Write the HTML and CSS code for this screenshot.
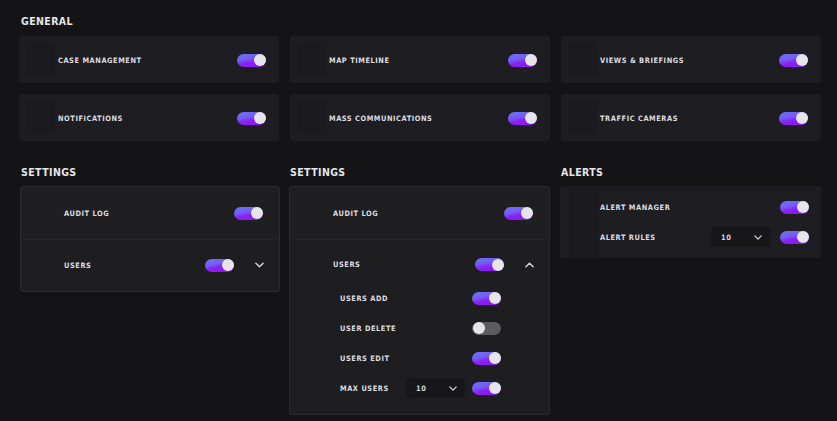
FILE: index.html
```html
<!DOCTYPE html>
<html>
<head>
<meta charset="utf-8">
<link rel="stylesheet" href="styles.css">
</head>
<body>
<div class="page">
  <section class="general">
    <h2 class="heading">GENERAL</h2>
    <div class="general-grid">
      <div class="tile"><div class="tile-icon"></div><span class="label">CASE MANAGEMENT</span><span class="toggle on"></span></div>
      <div class="tile"><div class="tile-icon"></div><span class="label">MAP TIMELINE</span><span class="toggle on"></span></div>
      <div class="tile"><div class="tile-icon"></div><span class="label">VIEWS &amp; BRIEFINGS</span><span class="toggle on"></span></div>
      <div class="tile"><div class="tile-icon"></div><span class="label">NOTIFICATIONS</span><span class="toggle on"></span></div>
      <div class="tile"><div class="tile-icon"></div><span class="label">MASS COMMUNICATIONS</span><span class="toggle on"></span></div>
      <div class="tile"><div class="tile-icon"></div><span class="label">TRAFFIC CAMERAS</span><span class="toggle on"></span></div>
    </div>
  </section>

  <section class="columns">
    <div class="col">
      <h2 class="heading">SETTINGS</h2>
      <div class="panel">
        <div class="row"><span class="label">AUDIT LOG</span><span class="toggle on"></span></div>
        <div class="group">
          <div class="row group-head"><span class="label">USERS</span><span class="toggle on"></span>
            <svg class="chev" viewBox="0 0 10 6" width="9" height="6"><path d="M1 1 L5 5 L9 1" fill="none" stroke="#d6d6da" stroke-width="1.6" stroke-linecap="round" stroke-linejoin="round"/></svg>
          </div>
        </div>
      </div>
    </div>

    <div class="col">
      <h2 class="heading">SETTINGS</h2>
      <div class="panel">
        <div class="row"><span class="label">AUDIT LOG</span><span class="toggle on"></span></div>
        <div class="group open">
          <div class="row group-head"><span class="label">USERS</span><span class="toggle on"></span>
            <svg class="chev" viewBox="0 0 10 6" width="9" height="6"><path d="M1 5 L5 1 L9 5" fill="none" stroke="#d6d6da" stroke-width="1.6" stroke-linecap="round" stroke-linejoin="round"/></svg>
          </div>
          <div class="sub"><span class="label">USERS ADD</span><span class="toggle on"></span></div>
          <div class="sub"><span class="label">USER DELETE</span><span class="toggle"></span></div>
          <div class="sub"><span class="label">USERS EDIT</span><span class="toggle on"></span></div>
          <div class="sub"><span class="label">MAX USERS</span>
            <div class="select sub-select"><span>10</span><svg viewBox="0 0 10 6" width="8" height="5"><path d="M1 1 L5 5 L9 1" fill="none" stroke="#d6d6da" stroke-width="1.6" stroke-linecap="round" stroke-linejoin="round"/></svg></div>
            <span class="toggle on"></span></div>
        </div>
      </div>
    </div>

    <div class="col">
      <h2 class="heading">ALERTS</h2>
      <div class="alerts">
        <div class="tile-icon alert-icon"></div>
        <div class="alert-rows">
          <div class="alert-row"><span class="label">ALERT MANAGER</span><span class="toggle on"></span></div>
          <div class="alert-row"><span class="label">ALERT RULES</span>
            <div class="select"><span>10</span><svg viewBox="0 0 10 6" width="8" height="5"><path d="M1 1 L5 5 L9 1" fill="none" stroke="#d6d6da" stroke-width="1.6" stroke-linecap="round" stroke-linejoin="round"/></svg></div>
            <span class="toggle on"></span></div>
        </div>
      </div>
    </div>
  </section>
</div>
</body>
</html>
```

FILE: styles.css
```css
* { box-sizing: border-box; }
html, body {
  margin: 0;
  padding: 0;
  background: #141316;
  height: 100%;
}
body {
  font-family: "DejaVu Sans Condensed", "DejaVu Sans", sans-serif;
  font-stretch: condensed;
  color: #dcdce0;
}
.page {
  padding: 15px 15px 0 20px;
}
.heading {
  margin: 0;
  font-size: 10.5px;
  font-weight: bold;
  letter-spacing: 0.4px;
  color: #e6e6ea;
  line-height: 12px;
  height: 12px;
}
.general .heading { margin-left: 1px; }
.general-grid {
  margin-top: 9px;
  display: grid;
  grid-template-columns: 260px 260px 260px;
  column-gap: 11px;
  row-gap: 11px;
  margin-left: -1px;
}
.tile {
  height: 47px;
  background: #1e1d21;
  border-radius: 3px;
  display: flex;
  align-items: center;
  padding: 6px 13px 5px 7px;
}
.tile-icon {
  width: 29px;
  height: 34px;
  background: #1b1a1e;
  margin-right: 3px;
  align-self: stretch;
}
.label {
  font-size: 7.4px;
  font-weight: bold;
  letter-spacing: 0.55px;
  color: #dcdce0;
  white-space: nowrap;
}
.tile .label { flex: 1; }

.toggle {
  position: relative;
  display: inline-block;
  width: 29px;
  height: 13px;
  border-radius: 7px;
  background: #5b5b60;
  flex: none;
}
.toggle::after {
  content: "";
  position: absolute;
  top: 0.5px;
  left: 0.5px;
  width: 12px;
  height: 12px;
  border-radius: 50%;
  background: #e6e6ea;
}
.toggle.on {
  background: linear-gradient(168deg, #6b72f6 0%, #745cf6 38%, #8a22f3 58%, #8d14f0 100%);
}
.toggle.on::after {
  left: auto;
  right: 0;
}

.columns {
  margin-top: 25px;
  display: grid;
  grid-template-columns: 260px 260px 261px;
  column-gap: 10px;
  align-items: start;
}
.columns .col:nth-child(2) { margin-left: -1px; }
.col .heading { margin-bottom: 8px; margin-left: 1px; }
.panel {
  background: #1f1f22;
  border: 1px solid #2b2c30;
  border-radius: 3px;
  padding: 0 1px 1px;
}
.row {
  display: flex;
  align-items: center;
  height: 52px;
  padding: 0 15px 0 42px;
}
.row .label { flex: 1; }
.group {
  background: #1e1e21;
  border-top: 1px solid #26272b;
  border-radius: 2px;
}
.group-head {
  height: 50px;
  padding-right: 14px;
}
.chev { margin-left: 21px; flex: none; }
.group.open .group-head { height: 43px; padding-top: 6px; }
.group.open { padding-bottom: 10px; }
.sub {
  display: flex;
  align-items: center;
  height: 30px;
  padding: 0 47px 0 49px;
}
.sub .label { flex: 1; }
.select {
  width: 59px;
  height: 20px;
  background: #17171a;
  border-radius: 3px;
  display: flex;
  align-items: center;
  justify-content: space-between;
  padding: 0 8px 0 10px;
  font-size: 7.4px;
  font-weight: bold;
  letter-spacing: 0.5px;
  color: #d6d6da;
  margin-right: 10px;
  flex: none;
}
.sub-select { margin-right: 7px; }

.alerts {
  background: #1e1d21;
  border-radius: 3px;
  height: 72px;
  display: flex;
  padding: 6px 12px 0 9px;
}
.alert-icon {
  width: 30px;
  height: auto;
  margin-right: 1px;
}
.alert-rows {
  flex: 1;
}
.alert-row {
  display: flex;
  align-items: center;
  height: 30px;
}
.alert-row .label { flex: 1; }
```
